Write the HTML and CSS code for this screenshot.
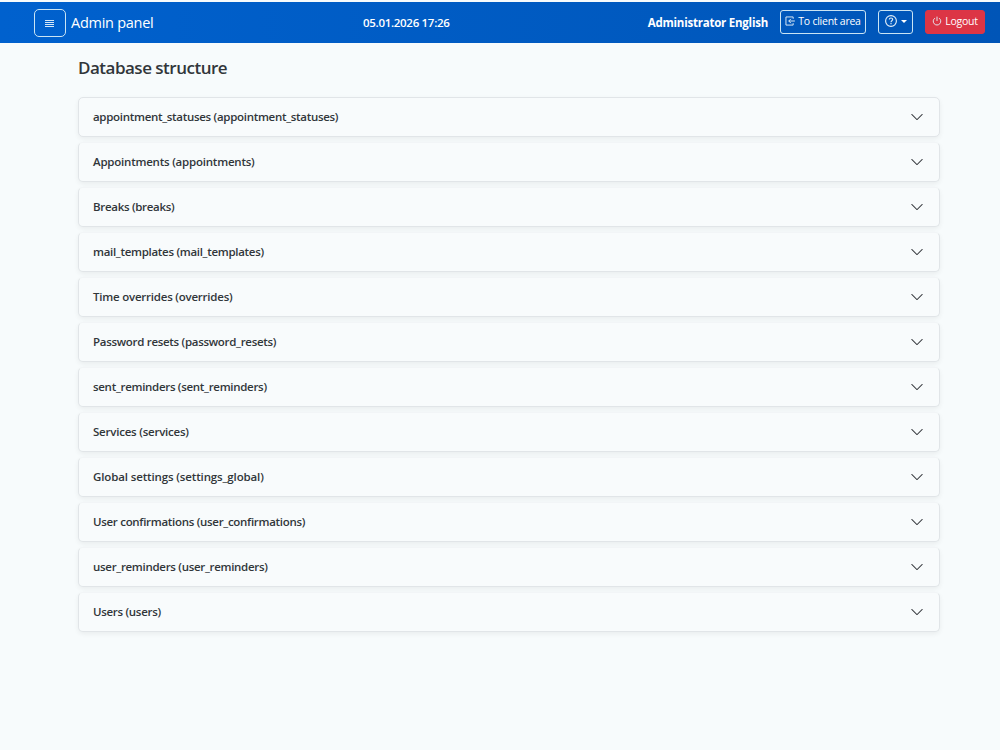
FILE: index.html
```html
<!DOCTYPE html>
<html lang="en">
<head>
<meta charset="utf-8">
<title>Admin panel</title>
<link rel="stylesheet" href="styles.css">
</head>
<body>
<svg class="defs" aria-hidden="true"><symbol id="chevron" viewBox="0 0 16 16"><path fill-rule="evenodd" d="M1.646 4.646a.5.5 0 0 1 .708 0L8 10.293l5.646-5.647a.5.5 0 0 1 .708.708l-6 6a.5.5 0 0 1-.708 0l-6-6a.5.5 0 0 1 0-.708z"/></symbol></svg>
<header class="topbar">
  <div class="brand">
    <button class="menu-btn" aria-label="Menu"><svg viewBox="0 0 9 9"><path d="M0 1.500h9M0 3.500h9M0 5.500h9M0 7.500h9"/></svg></button>
    <span class="brand-name">Admin panel</span>
  </div>
  <time class="clock">05.01.2026 17:26</time>
  <div class="actions">
    <span class="user">Administrator English</span>
    <button class="btn btn-client"><svg class="icon" viewBox="0 0 16 16"><path d="M13 4.500v-3H1.500v13H13v-3M15.800 8H6M9.500 4.500 6 8l3.500 3.500"/></svg><span>To client area</span></button>
    <button class="btn btn-help" aria-label="Help"><svg class="icon help-icon" viewBox="0 0 16 16"><circle cx="8" cy="8" r="7.2"/><path d="M5.800 6.100C5.800 3.200 10.300 3.400 10.200 6c0 1.600-2.200 1.700-2.200 3.500M8 10.800v1.500"/></svg><i class="caret"></i></button>
    <button class="btn btn-logout"><svg class="icon" viewBox="0 0 16 16"><path d="M8 1v7M4.700 3.400a6 6 0 1 0 6.600 0"/></svg><span>Logout</span></button>
  </div>
</header>
<main class="content">
  <h1 class="title">Database structure</h1>
  <div class="accordion">
    <div class="item"><span>appointment_statuses (appointment_statuses)</span><svg class="chevron"><use href="#chevron"/></svg></div>
    <div class="item item-loose"><span>Appointments (appointments)</span><svg class="chevron"><use href="#chevron"/></svg></div>
    <div class="item"><span>Breaks (breaks)</span><svg class="chevron"><use href="#chevron"/></svg></div>
    <div class="item"><span>mail_templates (mail_templates)</span><svg class="chevron"><use href="#chevron"/></svg></div>
    <div class="item item-loose"><span>Time overrides (overrides)</span><svg class="chevron"><use href="#chevron"/></svg></div>
    <div class="item"><span>Password resets (password_resets)</span><svg class="chevron"><use href="#chevron"/></svg></div>
    <div class="item"><span>sent_reminders (sent_reminders)</span><svg class="chevron"><use href="#chevron"/></svg></div>
    <div class="item item-loose"><span>Services (services)</span><svg class="chevron"><use href="#chevron"/></svg></div>
    <div class="item item-looser"><span>Global settings (settings_global)</span><svg class="chevron"><use href="#chevron"/></svg></div>
    <div class="item"><span>User confirmations (user_confirmations)</span><svg class="chevron"><use href="#chevron"/></svg></div>
    <div class="item"><span>user_reminders (user_reminders)</span><svg class="chevron"><use href="#chevron"/></svg></div>
    <div class="item"><span>Users (users)</span><svg class="chevron"><use href="#chevron"/></svg></div>
  </div>
</main>
</body>
</html>
```

FILE: styles.css
```css
* { box-sizing: border-box; }
body {
  margin: 0;
  min-height: 750px;
  padding-top: 2px;
  background: #f7fbfc;
  color: #31363a;
  font-family: "Open Sans", "Noto Sans", sans-serif;
}
.defs { position: absolute; width: 0; height: 0; }
button { font: inherit; color: inherit; }
.topbar {
  display: grid;
  grid-template-columns: 363px 1fr auto;
  align-items: start;
  height: 41px;
  padding-right: 15px;
  background: linear-gradient(90deg, #0061ce, #0055b7);
  color: #fff;
  white-space: nowrap;
}
.brand { display: flex; align-items: center; gap: 5px; padding: 7px 0 0 34px; }
.menu-btn {
  display: grid;
  place-items: center;
  width: 32px;
  height: 28px;
  padding: 0 1px 0 0;
  border: 1px solid #c9e4f4;
  border-radius: 5px;
  background: none;
}
.menu-btn svg { width: 9px; height: 9px; stroke: #d5e8f8; stroke-width: 1; }
.brand-name { font-size: 14.5px; line-height: 28px; letter-spacing: -.27px; }
.clock { padding-top: 11px; font-size: 11.5px; line-height: 20px; font-weight: 600; letter-spacing: -.3px; }
.actions { display: flex; align-items: center; padding-top: 8px; }
.user { margin-right: 12px; padding-top: 2px; font-size: 11.5px; line-height: 20px; font-weight: 700; letter-spacing: -.23px; }
.btn {
  display: flex;
  align-items: center;
  justify-content: center;
  gap: 3px;
  height: 24px;
  padding: 0 0 2px;
  border: 1px solid #c9e4f4;
  border-radius: 3px;
  background: none;
  font-size: 10.5px;
  line-height: 16px;
  letter-spacing: -.25px;
}
.btn-client { width: 86px; margin-right: 12px; }
.btn-help { width: 35px; margin-right: 12px; gap: 4px; }
.btn-logout { width: 60px; border-color: #dc3545; background: #dc3545; }
.icon { width: 10px; height: 10px; fill: none; stroke: #e5f0f8; stroke-width: 1.5; }
.help-icon { width: 12px; height: 12px; }
.caret { border: 3px solid transparent; border-top-color: #fff; border-bottom: 0; }
.content { width: 862px; margin-left: 78px; padding-top: 13px; }
.title { margin: 0 0 18px; font-size: 17px; line-height: 23px; font-weight: 600; letter-spacing: -.5px; }
.accordion { display: flex; flex-direction: column; gap: 5px; }
.item {
  display: flex;
  align-items: center;
  justify-content: space-between;
  height: 40px;
  padding: 0 15px 0 14px;
  border: 1px solid #e1e5e8;
  border-top-color: #f2f5f7;
  border-radius: 5px;
  background: #f8fbfc;
  box-shadow: 0 2px 5px rgba(0, 0, 0, .06);
  font-size: 11.5px;
  font-weight: 600;
  letter-spacing: -.3px;
}
.item span { padding-bottom: 2px; }
.item-loose { letter-spacing: -.22px; }
.item-looser { letter-spacing: -.13px; }
.item:first-child { border-top-color: #e1e5e8; }
.chevron { width: 14px; height: 14px; fill: #33373b; }
```
